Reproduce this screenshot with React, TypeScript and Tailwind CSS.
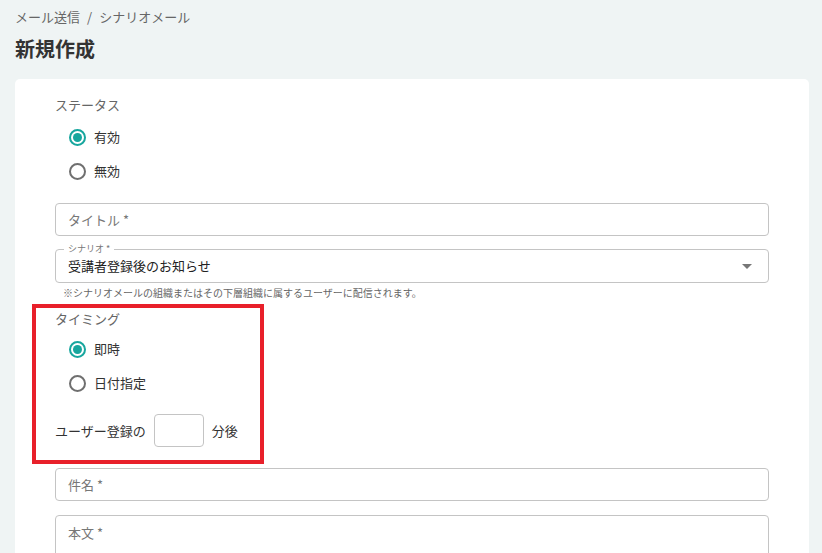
import { useState } from 'react';

function Radio({ label, checked, onClick }: { label: string; checked: boolean; onClick: () => void }) {
  return (
    <button type="button" onClick={onClick} className="flex h-[34px] items-center gap-[8px] pl-[14px] text-left">
      <span
        className={`flex h-[17px] w-[17px] items-center justify-center rounded-full border-2 ${
          checked ? 'border-[#17a69e]' : 'border-[#6f6f6f]'
        }`}
      >
        {checked && <span className="h-[9px] w-[9px] rounded-full bg-[#17a69e]" />}
      </span>
      <span className="text-[13px] text-[#333]">{label}</span>
    </button>
  );
}

function TextField({ label, tall }: { label: string; tall?: boolean }) {
  return (
    <div
      className={`flex w-full rounded-[4px] border border-[#c4c4c4] bg-white px-[12px] ${
        tall ? 'h-[60px] items-start pt-[7px]' : 'h-[33px] items-center'
      }`}
    >
      <span className="text-[13px] text-[#777]">{label}</span>
    </div>
  );
}

export default function App() {
  const [status, setStatus] = useState('有効');
  const [timing, setTiming] = useState('即時');

  return (
    <div
      className="h-[553px] overflow-hidden bg-[#eff4f4] pl-[15px] pr-[13px]"
      style={{ fontFamily: '"Noto Sans CJK JP", "Noto Sans", sans-serif' }}
    >
      {/* Header */}
      <div className="flex h-[34px] items-center pb-[1px]">
        <p className="text-[13px] leading-none text-[#666]">
          メール送信<span className="mx-[7px]">/</span>シナリオメール
        </p>
      </div>
      <div className="flex h-[29px] items-center">
        <h1 className="text-[20px] font-bold leading-none text-[#333]">新規作成</h1>
      </div>

      {/* Card */}
      <div className="mt-[16px] rounded-[5px] bg-white px-[40px] pb-[40px] pt-[17px]">
        <p className="text-[13px] leading-[18px] text-[#666]">ステータス</p>
        <div className="mt-[6px] flex flex-col">
          {['有効', '無効'].map((s) => (
            <Radio key={s} label={s} checked={status === s} onClick={() => setStatus(s)} />
          ))}
        </div>

        <div className="mt-[15px]">
          <TextField label="タイトル *" />
        </div>

        <div className="relative mt-[13px] flex h-[34px] items-center rounded-[4px] border border-[#c4c4c4] px-[12px]">
          <span className="absolute left-[8px] top-[-8px] bg-white px-[4px] text-[9px] leading-[14px] text-[#777]">
            シナリオ *
          </span>
          <span className="flex-1 text-[13px] text-[#222]">受講者登録後のお知らせ</span>
          <svg width="10" height="5" viewBox="0 0 10 5" className="mr-[4px]">
            <path d="M0 0h10L5 5z" fill="#777" />
          </svg>
        </div>
        <p className="mt-[3px] pl-[8px] text-[10px] leading-[14px] text-[#666]">
          ※シナリオメールの組織またはその下層組織に属するユーザーに配信されます。
        </p>

        {/* Timing */}
        <div className="relative mt-[10px]">
          <div className="pointer-events-none absolute left-[-23px] top-[-6px] h-[160px] w-[232px] border-[4px] border-[#e8202a]" />
          <p className="text-[13px] leading-[18px] text-[#666]">タイミング</p>
          <div className="mt-[4px] flex flex-col">
            {['即時', '日付指定'].map((t) => (
              <Radio key={t} label={t} checked={timing === t} onClick={() => setTiming(t)} />
            ))}
          </div>
          <div className="mt-[14px] flex items-center gap-[8px]">
            <span className="text-[13px] text-[#333]">ユーザー登録の</span>
            <div className="h-[33px] w-[50px] rounded-[4px] border border-[#c4c4c4]" />
            <span className="text-[13px] text-[#333]">分後</span>
          </div>
        </div>

        <div className="mt-[21px]">
          <TextField label="件名 *" />
        </div>
        <div className="mt-[14px]">
          <TextField label="本文 *" tall />
        </div>
      </div>
    </div>
  );
}
